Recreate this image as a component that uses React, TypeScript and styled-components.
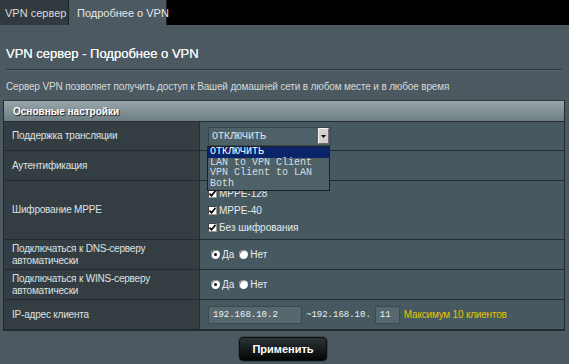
import styled, { createGlobalStyle } from 'styled-components';

const GlobalStyle = createGlobalStyle`
  html, body {
    margin: 0;
    padding: 0;
    background: #4d5960;
    font-family: 'Liberation Sans', Arial, sans-serif;
  }
`;

const Page = styled.div`
  width: 569px;
  height: 364px;
  background: #4d5960;
  overflow: hidden;
`;

const TabBar = styled.div`
  display: flex;
  height: 25px;
  background: #000;
`;

const Tab = styled.div<{ $active?: boolean }>`
  display: flex;
  align-items: center;
  white-space: nowrap;
  padding-left: ${({ $active }) => ($active ? '8px' : '5px')};
  width: ${({ $active }) => ($active ? '98px' : '69px')};
  box-sizing: border-box;
  font-size: 11px;
  color: ${({ $active }) => ($active ? '#e4e8ea' : '#d8dcde')};
  background: ${({ $active }) => ($active ? '#4d5960' : '#313b3f')};
  border-right: 1px solid #1e2528;
`;

const Content = styled.div`
  padding: 0 4px 0 3px;
`;

const Title = styled.h1`
  margin: 0;
  padding: 21px 3px 0;
  height: 16px;
  line-height: 16px;
  font-size: 13px;
  font-weight: normal;
  color: #f2f4f4;
  text-shadow: 0 0 0.4px #fff;
`;

const Rule = styled.div`
  margin: 7px 3px 0 3px;
  height: 1px;
  background: #2f383c;
  border-bottom: 1px solid #56646a;
`;

const Description = styled.p`
  margin: 0;
  padding: 10px 3px 0;
  height: 12px;
  line-height: 12px;
  font-size: 10px;
  letter-spacing: -0.15px;
  color: #d4d9db;
`;

const Table = styled.div`
  position: relative;
  margin-top: 7px;
  border: 1px solid #252d30;
  border-top-color: #303a3e;
  width: 560px;
`;

const Header = styled.div`
  height: 20px;
  display: flex;
  align-items: center;
  padding-left: 9px;
  font-size: 10px;
  font-weight: bold;
  color: #fff;
  text-shadow: 1px 1px 1px #1b2225;
  background: linear-gradient(#98a6aa, #6d7d82);
  border-bottom: 1px solid #252d30;
`;

const Row = styled.div<{ $h: number }>`
  display: grid;
  grid-template-columns: 196px 1fr;
  height: ${({ $h }) => $h}px;
  border-bottom: 1px solid #232b2e;
  &:last-child {
    border-bottom: none;
  }
`;

const Label = styled.div`
  display: flex;
  align-items: center;
  padding-left: 8px;
  font-size: 10px;
  line-height: 12px;
  letter-spacing: -0.2px;
  color: #dde2e4;
  background: #343e42;
  border-right: 1px solid #252d30;
`;

const Value = styled.div`
  display: flex;
  align-items: center;
  padding-left: 8px;
  background: #475960;
  font-size: 10px;
  color: #e6eaeb;
`;

const Stack = styled.div`
  display: flex;
  flex-direction: column;
  justify-content: center;
  padding-left: 8px;
  background: #475960;
  font-size: 10px;
  color: #e6eaeb;
`;

const SelectBox = styled.div`
  display: flex;
  align-items: center;
  justify-content: space-between;
  width: 123px;
  height: 19px;
  box-sizing: border-box;
  padding: 0 1px 0 3px;
  background: #4f6168;
  border: 1px solid #3a484d;
  font-family: 'Liberation Mono', 'Courier New', monospace;
  font-size: 10px;
  color: #e0e4e6;
`;

const Arrow = styled.span`
  display: flex;
  align-items: center;
  justify-content: center;
  width: 11px;
  height: 16px;
  background: #d4d2cc;
  border: 1px solid #f4f4f4;
  border-right-color: #6c6c6c;
  border-bottom-color: #6c6c6c;
  box-sizing: border-box;
`;

const DropList = styled.div`
  position: absolute;
  left: 203px;
  top: 45px;
  width: 123px;
  box-sizing: border-box;
  background: #4f6168;
  border: 1px solid #1c2224;
  font-family: 'Liberation Mono', 'Courier New', monospace;
  font-size: 10px;
  line-height: 10.5px;
  color: #d8dddf;
  padding-bottom: 1px;
  z-index: 2;
`;

const Option = styled.div<{ $selected?: boolean }>`
  padding-left: 2px;
  background: ${({ $selected }) => ($selected ? '#0a246a' : 'transparent')};
  color: ${({ $selected }) => ($selected ? '#fff' : '#d8dddf')};
`;

const CheckLine = styled.label`
  display: flex;
  align-items: center;
  gap: 2px;
  height: 17px;
`;

const Check = styled.span`
  display: inline-flex;
  width: 9px;
  height: 9px;
  background: #fff;
  box-sizing: border-box;
  border: 1px solid #999;
  border-top-color: #444;
  border-left-color: #444;
  align-items: center;
  justify-content: center;
`;

const Radio = styled.span<{ $on?: boolean }>`
  display: inline-flex;
  width: 9px;
  height: 9px;
  border-radius: 50%;
  background: #fff;
  box-shadow: inset 1px 1px 0 #888;
  align-items: center;
  justify-content: center;
  margin-right: 2px;
  &::after {
    content: '';
    width: 3px;
    height: 3px;
    border-radius: 50%;
    background: ${({ $on }) => ($on ? '#000' : 'transparent')};
  }
`;

const RadioGroup = styled.div`
  display: flex;
  align-items: center;
  gap: 3px;
  padding-left: 3px;
`;

const RadioItem = styled.span`
  display: inline-flex;
  align-items: center;
  margin-right: 2px;
`;

const IpInput = styled.div<{ $w: number }>`
  display: flex;
  align-items: center;
  width: ${({ $w }) => $w}px;
  height: 18px;
  box-sizing: border-box;
  padding-left: 4px;
  background: #56686e;
  border: 1px solid #3c4a4f;
  font-family: 'Liberation Mono', 'Courier New', monospace;
  font-size: 9px;
  color: #eef1f2;
`;

const Mono = styled.span`
  font-family: 'Liberation Mono', 'Courier New', monospace;
  font-size: 9px;
  margin: 0 4px 0 4px;
  color: #eef1f2;
`;

const Hint = styled.span`
  margin-left: 4px;
  font-size: 10px;
  letter-spacing: -0.2px;
  color: #e8c200;
`;

const ButtonBar = styled.div`
  display: flex;
  justify-content: center;
  padding: 6px 0 0 0;
  margin-left: -2px;
`;

const Button = styled.button`
  width: 88px;
  height: 24px;
  border-radius: 4px;
  border: 1px solid #0c0f10;
  background: linear-gradient(#2a3337, #040606);
  box-shadow: 0 0 0 1px #3c474c;
  color: #fff;
  font-family: 'Liberation Sans', Arial, sans-serif;
  font-size: 11px;
  font-weight: bold;
  cursor: pointer;
`;

function CheckMark() {
  return (
    <svg width="7" height="7" viewBox="0 0 7 7">
      <path d="M0.5 3.5 L2.5 5.8 L6.5 0.8" stroke="#000" strokeWidth="1.6" fill="none" />
    </svg>
  );
}

function App() {
  return (
    <Page>
      <GlobalStyle />
      <TabBar>
        <Tab>VPN сервер</Tab>
        <Tab $active>Подробнее о VPN</Tab>
      </TabBar>
      <Content>
        <Title>VPN сервер - Подробнее о VPN</Title>
        <Rule />
        <Description>
          Сервер VPN позволяет получить доступ к Вашей домашней сети в любом месте и в любое время
        </Description>
        <Table>
          <Header>Основные настройки</Header>
          <Row $h={28}>
            <Label>Поддержка трансляции</Label>
            <Value>
              <SelectBox>
                ОТКЛЮЧИТЬ
                <Arrow>
                  <svg width="5" height="3" viewBox="0 0 5 3">
                    <path d="M0 0 H5 L2.5 3 Z" fill="#000" />
                  </svg>
                </Arrow>
              </SelectBox>
            </Value>
          </Row>
          <Row $h={29}>
            <Label>Аутентификация</Label>
            <Value />
          </Row>
          <Row $h={58}>
            <Label>Шифрование MPPE</Label>
            <Stack>
              <CheckLine>
                <Check><CheckMark /></Check>MPPE-128
              </CheckLine>
              <CheckLine>
                <Check><CheckMark /></Check>MPPE-40
              </CheckLine>
              <CheckLine>
                <Check><CheckMark /></Check>Без шифрования
              </CheckLine>
            </Stack>
          </Row>
          <Row $h={29}>
            <Label>
              Подключаться к DNS-серверу
              <br />
              автоматически
            </Label>
            <Value>
              <RadioGroup>
                <RadioItem><Radio $on />Да</RadioItem>
                <RadioItem><Radio />Нет</RadioItem>
              </RadioGroup>
            </Value>
          </Row>
          <Row $h={29}>
            <Label>
              Подключаться к WINS-серверу
              <br />
              автоматически
            </Label>
            <Value>
              <RadioGroup>
                <RadioItem><Radio $on />Да</RadioItem>
                <RadioItem><Radio />Нет</RadioItem>
              </RadioGroup>
            </Value>
          </Row>
          <Row $h={29}>
            <Label>IP-адрес клиента</Label>
            <Value>
              <IpInput $w={94}>192.168.10.2</IpInput>
              <Mono>~192.168.10.</Mono>
              <IpInput $w={25}>11</IpInput>
              <Hint>Максимум 10 клиентов</Hint>
            </Value>
          </Row>
          <DropList>
            <Option $selected>ОТКЛЮЧИТЬ</Option>
            <Option>LAN to VPN Client</Option>
            <Option>VPN Client to LAN</Option>
            <Option>Both</Option>
          </DropList>
        </Table>
        <ButtonBar>
          <Button>Применить</Button>
        </ButtonBar>
      </Content>
    </Page>
  );
}

export default App;
